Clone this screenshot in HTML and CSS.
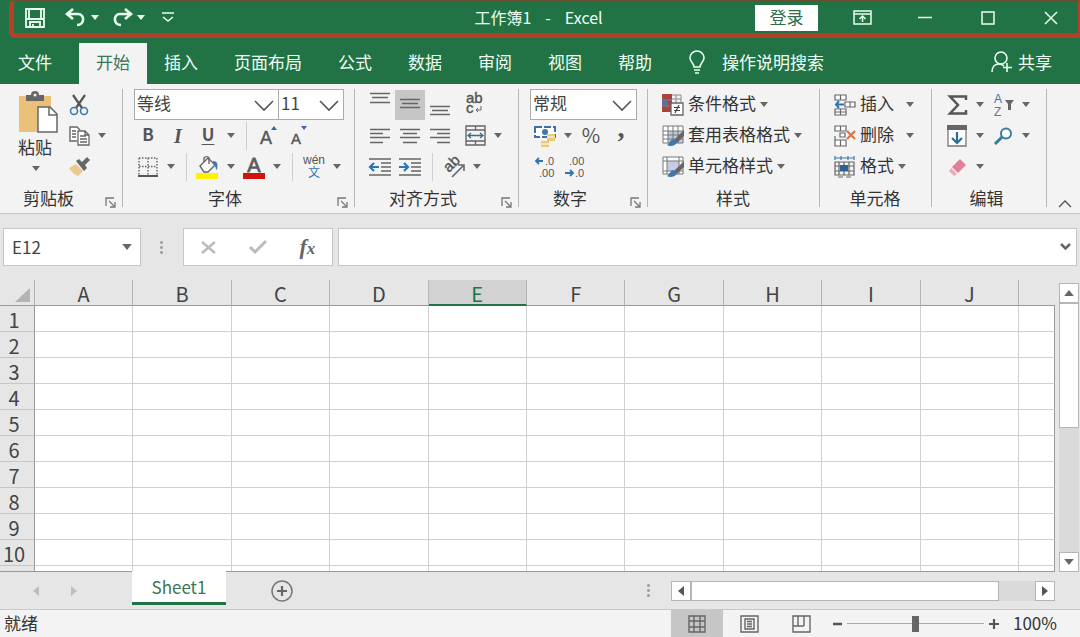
FILE: index.html
```html
<!DOCTYPE html>
<html lang="zh-CN">
    <head>
        <meta charset="utf-8">
        <title>工作簿1 - Excel</title>
        <link rel="stylesheet" href="styles.css">
    </head>
    <body>
        <svg class="defs">
            <symbol id="down" viewBox="0 0 8 5"><path d="M0 0h8L4 5z" fill="currentColor"/></symbol>
            <symbol id="chev" viewBox="0 0 20 12"><path d="M1 1l9 9 9-9" fill="none" stroke="#555" stroke-width="1.6"/></symbol>
            <symbol id="launch" viewBox="0 0 11 11"><path d="M1 9V1h8M4 4l5 5M10 5v5H5" fill="none" stroke="#777" stroke-width="1.3"/></symbol>
            <symbol id="brush" viewBox="0 0 22 22"><path d="M22 5v6l-7 7-3-3z" fill="#666"/><path d="M11 14c-3 1-3 4-6 6 3 2 9 1 10-3z" fill="#3f78ad"/></symbol>
        </svg>

        <header>
            <div class="titlebar">
                <div class="quick">
                    <button class="qbtn" aria-label="保存"><svg width="20" height="20" viewBox="0 0 20 20"><path d="M1 1h18v18H1zM1 11h18M4 1v10M16 1v10M5 19v-5h10v5M8 19v-3" fill="none" stroke="#e8fff0" stroke-width="1.8"/></svg></button>
                    <button class="qbtn" aria-label="撤消"><svg width="21" height="19" viewBox="0 0 21 19"><path d="M8 1L2 6l6 5M2 6h11c7 0 7 11-1 11" fill="none" stroke="#e8fff0" stroke-width="2.6"/></svg></button>
                    <button class="arr" aria-label="撤消列表"><svg width="8" height="5"><use href="#down"/></svg></button>
                    <button class="qbtn" aria-label="恢复"><svg width="21" height="19" viewBox="0 0 21 19"><path d="M13 1l6 5-6 5M19 6H8c-7 0-7 11 1 11" fill="none" stroke="#e8fff0" stroke-width="2.6"/></svg></button>
                    <button class="arr" aria-label="恢复列表"><svg width="8" height="5"><use href="#down"/></svg></button>
                    <button class="qbtn" aria-label="自定义"><svg width="12" height="11" viewBox="0 0 12 11"><path d="M0 1h12M1 5l5 4 5-4" fill="none" stroke="#e8fff0" stroke-width="1.5"/></svg></button>
                </div>
                <div class="title"><span>工作簿1</span><span>-</span><span>Excel</span></div>
                <div class="window">
                    <button class="login">登录</button>
                    <button class="wbtn" aria-label="功能区显示选项"><svg width="19" height="15" viewBox="0 0 19 15"><path d="M1 1h17v13H1zM1 4h17M9.500 12V6M6.500 9l3-3 3 3" fill="none" stroke="#e8fff0" stroke-width="1.5"/></svg></button>
                    <button class="wbtn" aria-label="最小化"><svg width="14" height="3" viewBox="0 0 14 3"><path d="M0 1.500h14" stroke="#e8fff0" stroke-width="1.5"/></svg></button>
                    <button class="wbtn" aria-label="最大化"><svg width="14" height="14" viewBox="0 0 14 14"><path d="M1 1h12v12H1z" fill="none" stroke="#e8fff0" stroke-width="1.5"/></svg></button>
                    <button class="wbtn" aria-label="关闭"><svg width="14" height="14" viewBox="0 0 14 14"><path d="M1 1l12 12M13 1L1 13" stroke="#e8fff0" stroke-width="1.5"/></svg></button>
                </div>
            </div>
            <nav class="tabs">
                <button class="tab file">文件</button>
                <button class="tab active">开始</button>
                <button class="tab">插入</button>
                <button class="tab">页面布局</button>
                <button class="tab">公式</button>
                <button class="tab">数据</button>
                <button class="tab">审阅</button>
                <button class="tab">视图</button>
                <button class="tab">帮助</button>
                <label class="tell">
                    <svg width="18" height="24" viewBox="0 0 18 24"><path d="M6 17c0-4-4-5-4-9a7 7 0 0 1 14 0c0 4-4 5-4 9zM6 20h6M7 23h4" fill="none" stroke="#e8fff0" stroke-width="1.6"/></svg>
                    <input type="text" placeholder="操作说明搜索">
                </label>
                <button class="share">
                    <svg width="22" height="22" viewBox="0 0 22 22"><circle cx="10" cy="7" r="6" fill="none" stroke="#e8fff0" stroke-width="1.6"/><path d="M1 21c0-5 3-8 7-8 2 0 3 0 5 2M16 12v9M12 16.500h9" fill="none" stroke="#e8fff0" stroke-width="1.6"/></svg>
                    共享
                </button>
            </nav>
        </header>

        <section class="ribbon">
            <div class="group clip">
                <div class="body paste-body">
                    <button class="paste">
                        <svg width="40" height="42" viewBox="0 0 40 42"><path d="M1 5h32v36H1z" fill="#ebc078"/><path d="M8 4h5a4 4 0 0 1 8 0h5v6H8z" fill="#666"/><circle cx="17" cy="4" r="1.500" fill="#f2f2f2"/><path d="M20 16h12l7 7v18H20z" fill="#fff" stroke="#666" stroke-width="1.500"/><path d="M31 16v8h8" fill="none" stroke="#666" stroke-width="1.500"/></svg>
                        <span>粘贴</span>
                        <svg width="8" height="5"><use href="#down"/></svg>
                    </button>
                    <div>
                        <div class="row"><button class="btn" aria-label="剪切"><svg width="20" height="20" viewBox="0 0 20 20"><path d="M4 0l9 13M16 0L7 13" stroke="#555" stroke-width="2.200"/><circle cx="5" cy="16" r="3.500" fill="none" stroke="#3f78ad" stroke-width="1.600"/><circle cx="15" cy="16" r="3.500" fill="none" stroke="#3f78ad" stroke-width="1.600"/></svg></button></div>
                        <div class="row"><button class="btn" aria-label="复制"><svg width="21" height="20" viewBox="0 0 21 20"><path d="M8 15H1V1h7l3 3" fill="#fff" stroke="#666" stroke-width="1.400"/><path d="M9 5h7l4 4v10H9zM16 5v4h4M3 5h4M3 8h4M3 11h4M11 10h6M11 13h7M11 16h7" fill="#fff" stroke="#666" stroke-width="1.300"/></svg></button><button class="arr" aria-label="复制选项"><svg width="8" height="5"><use href="#down"/></svg></button></div>
                        <div class="row"><button class="btn" aria-label="格式刷"><svg width="22" height="20" viewBox="0 0 22 20"><path d="M1 11l7-4 7 7-5 5c-2-1-5-2-9-8z" fill="#ebc890"/><path d="M8 4l3-2 3 3 5-5 3 3-5 5 2 3-3 3z" fill="#666"/></svg></button></div>
                    </div>
                </div>
                <div class="caption">剪贴板<button aria-label="剪贴板设置"><svg width="11" height="11"><use href="#launch"/></svg></button></div>
            </div>

            <div class="group font">
                <div class="body">
                    <div class="row">
                        <label class="combo name"><select aria-label="字体"><option>等线</option></select><svg width="20" height="12"><use href="#chev"/></svg></label>
                        <label class="combo size"><select aria-label="字号"><option>11</option></select><svg width="20" height="12"><use href="#chev"/></svg></label>
                    </div>
                    <div class="row">
                        <button class="btn bold">B</button>
                        <button class="btn italic">I</button>
                        <button class="btn underline">U</button>
                        <button class="arr" aria-label="下划线选项"><svg width="8" height="5"><use href="#down"/></svg></button>
                        <span class="sep"></span>
                        <button class="btn" aria-label="增大字号"><svg width="20" height="22" viewBox="0 0 20 22"><text x="2" y="19" font-size="18" stroke="#555" stroke-width=".4">A</text><path d="M13 5l3-4 3 4z" fill="#3f5fad"/></svg></button>
                        <button class="btn" aria-label="减小字号"><svg width="20" height="22" viewBox="0 0 20 22"><text x="3" y="19" font-size="15" stroke="#555" stroke-width=".4">A</text><path d="M13 1l3 4 3-4z" fill="#3f5fad"/></svg></button>
                    </div>
                    <div class="row">
                        <button class="btn" aria-label="边框"><svg width="20" height="20" viewBox="0 0 20 20"><path d="M1 1h18v17M1 1v17M10 1v17M1 9.500h18" fill="none" stroke="#666" stroke-width="1.400" stroke-dasharray="1.500 1.500"/><path d="M0 19h20" stroke="#555" stroke-width="2"/></svg></button>
                        <button class="arr" aria-label="边框选项"><svg width="8" height="5"><use href="#down"/></svg></button>
                        <span class="sep"></span>
                        <button class="btn" aria-label="填充颜色"><svg width="24" height="24" viewBox="0 0 24 24"><path d="M0 18h22v6H0z" fill="#fff200"/><path d="M4 11l8-8 7 7-7 7H8z" fill="#fff" stroke="#666" stroke-width="1.400"/><path d="M8 7V3a3 3 0 0 1 5 0v6" fill="none" stroke="#666" stroke-width="1.400"/><path d="M17 6c5 0 5 4 4 9-2-2-1-4-4-6z" fill="#3f78ad"/></svg></button>
                        <button class="arr" aria-label="填充颜色选项"><svg width="8" height="5"><use href="#down"/></svg></button>
                        <button class="btn" aria-label="字体颜色"><svg width="22" height="24" viewBox="0 0 22 24"><text x="11" y="17" font-size="20" text-anchor="middle" stroke="#666" stroke-width=".8">A</text><path d="M0 18h22v6H0z" fill="#d0140c"/></svg></button>
                        <button class="arr" aria-label="字体颜色选项"><svg width="8" height="5"><use href="#down"/></svg></button>
                        <span class="sep"></span>
                        <button class="btn" aria-label="拼音"><svg width="24" height="24" viewBox="0 0 24 24"><text x="12" y="9" font-size="12" text-anchor="middle">wén</text><text class="wen" x="12" y="22" font-size="12" text-anchor="middle">文</text></svg></button>
                        <button class="arr" aria-label="拼音选项"><svg width="8" height="5"><use href="#down"/></svg></button>
                    </div>
                </div>
                <div class="caption">字体<button aria-label="字体设置"><svg width="11" height="11"><use href="#launch"/></svg></button></div>
            </div>

            <div class="group align">
                <div class="body">
                    <div class="row">
                        <button class="btn" aria-label="顶端对齐"><svg width="20" height="26" viewBox="0 0 20 26"><path d="M0 1.500h20M2 5.500h16M0 10.500h20" stroke="#666" stroke-width="1.500"/></svg></button>
                        <button class="btn on" aria-label="垂直居中"><svg width="20" height="26" viewBox="0 0 20 26"><path d="M0 7.500h20M2 11.500h16M0 15.500h20" stroke="#666" stroke-width="1.500"/></svg></button>
                        <button class="btn" aria-label="底端对齐"><svg width="20" height="26" viewBox="0 0 20 26"><path d="M0 14.500h20M2 18.500h16M0 22.500h20" stroke="#666" stroke-width="1.500"/></svg></button>
                        <span class="gap"></span>
                        <button class="btn" aria-label="自动换行"><svg width="20" height="26" viewBox="0 0 20 26"><text x="1" y="11" font-size="15" stroke="#555" stroke-width=".4">ab</text><text x="1" y="21" font-size="15" stroke="#555" stroke-width=".4">c</text><path d="M16 14v4h-5M13 16l-2 2 2 2" fill="none" stroke="#666"/></svg></button>
                    </div>
                    <div class="row">
                        <button class="btn" aria-label="左对齐"><svg width="20" height="16" viewBox="0 0 20 16"><path d="M0 1.500h20M0 5.500h13M0 9.500h20M0 14.500h13" stroke="#666" stroke-width="1.500"/></svg></button>
                        <button class="btn" aria-label="居中"><svg width="20" height="16" viewBox="0 0 20 16"><path d="M0 1.500h20M3 5.500h14M0 9.500h20M3 14.500h14" stroke="#666" stroke-width="1.500"/></svg></button>
                        <button class="btn" aria-label="右对齐"><svg width="20" height="16" viewBox="0 0 20 16"><path d="M0 1.500h20M7 5.500h13M0 9.500h20M7 14.500h13" stroke="#666" stroke-width="1.500"/></svg></button>
                        <span class="gap"></span>
                        <button class="btn" aria-label="合并后居中"><svg width="21" height="21" viewBox="0 0 21 21"><path d="M1 1h19v19H1zM1 5h19M1 16h19M10.500 1v4M10.500 16v4" fill="none" stroke="#666" stroke-width="1.400"/><path d="M4 10.500h13M6 8l-3 2.500L6 13M15 8l3 2.500L15 13" fill="none" stroke="#3a6a86" stroke-width="1.300"/></svg></button>
                        <button class="arr" aria-label="合并选项"><svg width="8" height="5"><use href="#down"/></svg></button>
                    </div>
                    <div class="row">
                        <button class="btn" aria-label="减少缩进"><svg width="22" height="18" viewBox="0 0 22 18"><path d="M0 1h22M12 5h10M12 9h10M12 13h10M0 17h22" stroke="#666" stroke-width="1.500"/><path d="M10 9H2M5 5L1 9l4 4" fill="none" stroke="#2e75b6" stroke-width="2.200"/></svg></button>
                        <button class="btn" aria-label="增加缩进"><svg width="22" height="18" viewBox="0 0 22 18"><path d="M0 1h22M12 5h10M12 9h10M12 13h10M0 17h22" stroke="#666" stroke-width="1.500"/><path d="M0 9h8M5 5l4 4-4 4" fill="none" stroke="#2e75b6" stroke-width="2.200"/></svg></button>
                        <span class="sep"></span>
                        <button class="btn" aria-label="方向"><svg width="24" height="22" viewBox="0 0 24 22"><text x="0" y="0" font-size="15" stroke="#555" stroke-width=".4" transform="translate(7 17) rotate(-45)">ab</text><path d="M10 21L21 10M16 9h6v6" fill="none" stroke="#666" stroke-width="1.600"/></svg></button>
                        <button class="arr" aria-label="方向选项"><svg width="8" height="5"><use href="#down"/></svg></button>
                    </div>
                </div>
                <div class="caption">对齐方式<button aria-label="对齐设置"><svg width="11" height="11"><use href="#launch"/></svg></button></div>
            </div>

            <div class="group number">
                <div class="body">
                    <div class="row">
                        <label class="combo format"><select aria-label="数字格式"><option>常规</option></select><svg width="20" height="12"><use href="#chev"/></svg></label>
                    </div>
                    <div class="row">
                        <button class="btn" aria-label="会计数字格式"><svg width="24" height="22" viewBox="0 0 24 22"><path d="M2 2h20v10H2z" fill="#fff" stroke="#3f6fa8" stroke-width="2" stroke-dasharray="7 2"/><circle cx="12" cy="7" r="3" fill="#3f78ad"/><path d="M14 9h8v7h-8zM8 16h8v6H8z" fill="#ebc878"/><path d="M14 12h8M8 19h8" stroke="#fff"/></svg></button>
                        <button class="arr" aria-label="会计选项"><svg width="8" height="5"><use href="#down"/></svg></button>
                        <button class="btn percent">%</button>
                        <button class="btn comma">,</button>
                    </div>
                    <div class="row">
                        <button class="btn" aria-label="增加小数位数"><svg width="22" height="22" viewBox="0 0 22 22"><text x="11" y="9" font-size="11">.0</text><text x="5" y="21" font-size="11">.00</text><path d="M9 5H2M5 2L2 5l3 3" fill="none" stroke="#2e75b6" stroke-width="1.800"/></svg></button>
                        <button class="btn" aria-label="减少小数位数"><svg width="22" height="22" viewBox="0 0 22 22"><text x="5" y="9" font-size="11">.00</text><text x="11" y="21" font-size="11">.0</text><path d="M1 17h8M6 14l3 3-3 3" fill="none" stroke="#2e75b6" stroke-width="1.800"/></svg></button>
                    </div>
                </div>
                <div class="caption">数字<button aria-label="数字设置"><svg width="11" height="11"><use href="#launch"/></svg></button></div>
            </div>

            <div class="group style">
                <div class="body">
                    <div class="row"><button class="cmd"><svg width="22" height="22" viewBox="0 0 22 22"><path d="M0 0h10v18H0z" fill="#a5453c"/><path d="M10 1h9v8M14 1v8M10 5h9M0 6h10M0 12h8" fill="none" stroke="#888"/><path d="M0 6h6v5H0z" fill="#5b6fa0"/><path d="M9 9h12v12H9z" fill="#fff" stroke="#666" stroke-width="1.300"/><path d="M12 13.500h6M12 16.500h6M17 11l-4 8" stroke="#444" stroke-width="1.200"/></svg><span>条件格式</span><svg width="8" height="5"><use href="#down"/></svg></button></div>
                    <div class="row"><button class="cmd"><svg width="22" height="22" viewBox="0 0 22 22"><path d="M1 1h20v17H1z" fill="#fff"/><path d="M6 6h15v12H6z" fill="#b9cbe2"/><path d="M1 1h20v17H1zM1 6h20M1 10h20M1 14h20M6 1v17M11 1v17M16 1v17" fill="none" stroke="#777"/><use href="#brush"/></svg><span>套用表格格式</span><svg width="8" height="5"><use href="#down"/></svg></button></div>
                    <div class="row"><button class="cmd"><svg width="22" height="22" viewBox="0 0 22 22"><path d="M1 1h20v17H1z" fill="#fff"/><path d="M5 5h12v10H5z" fill="#c5cde6"/><path d="M1 1h20v17H1zM1 5h20M5 1v17M17 1v17M1 15h20" fill="none" stroke="#777"/><use href="#brush"/></svg><span>单元格样式</span><svg width="8" height="5"><use href="#down"/></svg></button></div>
                </div>
                <div class="caption">样式</div>
            </div>

            <div class="group cells">
                <div class="body">
                    <div class="row"><button class="cmd wide"><svg width="22" height="22" viewBox="0 0 22 22"><path d="M1 1h11v5H1zM6.500 1v5M1 15h11v6H1zM6.500 15v6M1 18h11M11 8h10v5H11zM16 8v5" fill="#fff" stroke="#666" stroke-width="1.200"/><path d="M10 10.500H2M5 7l-3 3.500L5 14" fill="none" stroke="#2e75b6" stroke-width="2"/></svg><span>插入</span><svg width="8" height="5"><use href="#down"/></svg></button></div>
                    <div class="row"><button class="cmd wide"><svg width="22" height="22" viewBox="0 0 22 22"><path d="M1 1h11v5H1zM6.500 1v5M1 15h11v6H1zM6.500 15v6M1 11v4M6 8h5v4H6z" fill="#fff" stroke="#666" stroke-width="1.200"/><path d="M13 6l8 8M21 6l-8 8" stroke="#de7440" stroke-width="2.200"/></svg><span>删除</span><svg width="8" height="5"><use href="#down"/></svg></button></div>
                    <div class="row"><button class="cmd"><svg width="22" height="22" viewBox="0 0 22 22"><path d="M1 6h19v13H1zM1 10h19M1 15h19M5 6v13M10 6v13M15 6v13M4 21h5M12 21h5" fill="none" stroke="#666" stroke-width="1.200"/><path d="M6 9h8v6H6z" fill="#2e6090"/><path d="M1 0v4M20 0v4M1 2h19M7 0v4M14 0v4" stroke="#3f78ad" stroke-width="1.200"/></svg><span>格式</span><svg width="8" height="5"><use href="#down"/></svg></button></div>
                </div>
                <div class="caption">单元格</div>
            </div>

            <div class="group edit">
                <div class="body">
                    <div class="row">
                        <button class="btn" aria-label="自动求和"><svg width="20" height="20" viewBox="0 0 20 20"><path d="M19 5V1.500H3L11 10l-8 8.500h16V15" fill="none" stroke="#555" stroke-width="2.500"/></svg></button>
                        <button class="arr" aria-label="求和选项"><svg width="8" height="5"><use href="#down"/></svg></button>
                        <button class="btn" aria-label="排序和筛选"><svg width="22" height="24" viewBox="0 0 22 24"><text class="a" x="2" y="10" font-size="12">A</text><text class="z" x="2" y="23" font-size="12">Z</text><path d="M13 7h9l-3 4v6h-3v-6z" fill="#666"/></svg></button>
                        <button class="arr" aria-label="排序选项"><svg width="8" height="5"><use href="#down"/></svg></button>
                    </div>
                    <div class="row">
                        <button class="btn" aria-label="填充"><svg width="20" height="22" viewBox="0 0 20 22"><path d="M1 1h18v20H1z" fill="#fff" stroke="#777" stroke-width="1.300"/><path d="M0 0h20v5H0z" fill="#666"/><path d="M10 7v11M5 13l5 5 5-5" fill="none" stroke="#2e6f90" stroke-width="2.200"/></svg></button>
                        <button class="arr" aria-label="填充选项"><svg width="8" height="5"><use href="#down"/></svg></button>
                        <button class="btn" aria-label="查找和选择"><svg width="20" height="18" viewBox="0 0 20 18"><circle cx="13" cy="6.500" r="5" fill="#fff" stroke="#3a7a9c" stroke-width="2"/><path d="M9 10l-7 7" stroke="#3a7a9c" stroke-width="3"/></svg></button>
                        <button class="arr" aria-label="查找选项"><svg width="8" height="5"><use href="#down"/></svg></button>
                    </div>
                    <div class="row">
                        <button class="btn" aria-label="清除"><svg width="18" height="18" viewBox="0 0 18 18"><path d="M12 1l6 6-8 8-6-6z" fill="#e08098"/><path d="M3 10l6 6-3 2-5-5z" fill="#eda9b8"/></svg></button>
                        <button class="arr" aria-label="清除选项"><svg width="8" height="5"><use href="#down"/></svg></button>
                    </div>
                </div>
                <div class="caption">编辑</div>
            </div>
            <button class="collapse" aria-label="折叠功能区"><svg width="14" height="8" viewBox="0 0 14 8"><path d="M1 7l6-6 6 6" fill="none" stroke="#555" stroke-width="1.400"/></svg></button>
        </section>

        <section class="formula">
            <label class="namebox"><input type="text" value="E12" aria-label="名称框"><svg width="10" height="6"><use href="#down"/></svg></label>
            <span class="dots"></span>
            <div class="fx">
                <button aria-label="取消"><svg width="15" height="13" viewBox="0 0 15 13"><path d="M1 1l13 11M14 1L1 12" stroke="#bbb" stroke-width="2.500"/></svg></button>
                <button aria-label="输入"><svg width="18" height="14" viewBox="0 0 18 14"><path d="M1 7l5 5L17 1" fill="none" stroke="#bbb" stroke-width="3"/></svg></button>
                <button class="fn"><i>f</i><i class="x">x</i></button>
            </div>
            <label class="entry"><input type="text" aria-label="编辑栏"><svg width="11" height="8" viewBox="0 0 11 8"><path d="M1 1l4.500 4.500L10 1" fill="none" stroke="#666" stroke-width="2.500"/></svg></label>
        </section>

        <main>
            <div class="sheet">
                <table>
                    <thead><tr id="letters"></tr></thead>
                    <tbody id="rows"></tbody>
                </table>
            </div>
            <div class="vscroll">
                <button aria-label="向上滚动"><svg class="up" width="10" height="6"><use href="#down"/></svg></button>
                <div class="vthumb"></div>
                <button class="end" aria-label="向下滚动"><svg width="10" height="6"><use href="#down"/></svg></button>
            </div>
        </main>

        <section class="sheets">
            <div class="nav">
                <button aria-label="上一个"><svg width="6" height="10" viewBox="0 0 6 10"><path d="M6 0v10L0 5z" fill="#bdbdbd"/></svg></button>
                <button aria-label="下一个"><svg width="6" height="10" viewBox="0 0 6 10"><path d="M0 0v10l6-5z" fill="#bdbdbd"/></svg></button>
            </div>
            <button class="sheettab">Sheet1</button>
            <button class="add" aria-label="新工作表"><svg width="22" height="22" viewBox="0 0 22 22"><circle cx="11" cy="11" r="10" fill="none" stroke="#777" stroke-width="1.500"/><path d="M11 6v10M6 11h10" stroke="#666" stroke-width="2.200"/></svg></button>
            <span class="dots"></span>
            <div class="hscroll">
                <button aria-label="向左滚动"><svg width="6" height="10" viewBox="0 0 6 10"><path d="M6 0v10L0 5z" fill="#555"/></svg></button>
                <div class="hthumb"></div>
                <button class="end" aria-label="向右滚动"><svg width="6" height="10" viewBox="0 0 6 10"><path d="M0 0v10l6-5z" fill="#555"/></svg></button>
            </div>
        </section>

        <footer>
            <span class="ready">就绪</span>
            <button class="view on" aria-label="普通"><svg width="18" height="18" viewBox="0 0 18 18"><path d="M1 1h16v16H1zM1 6h16M1 12h16M6 1v16M12 1v16" fill="none" stroke="#666" stroke-width="1.400"/></svg></button>
            <button class="view" aria-label="页面布局"><svg width="19" height="18" viewBox="0 0 19 18"><path d="M1 1h17v16H1zM5 4h9v10H5zM7 6.500h5M7 9h5M7 11.500h5" fill="none" stroke="#666" stroke-width="1.400"/></svg></button>
            <button class="view" aria-label="分页预览"><svg width="19" height="18" viewBox="0 0 19 18"><path d="M1 1h17v16H1zM6 1v10M12 1v10M1 11h11" fill="none" stroke="#666" stroke-width="1.400"/></svg></button>
            <button class="zoom" aria-label="缩小"><svg width="9" height="10" viewBox="0 0 9 10"><path d="M0 5h9" stroke="#555" stroke-width="2.500"/></svg></button>
            <input type="range" min="0" max="100" value="50" aria-label="缩放">
            <button class="zoom" aria-label="放大"><svg width="10" height="10" viewBox="0 0 10 10"><path d="M0 5h10M5 0v10" stroke="#555" stroke-width="2.200"/></svg></button>
            <span class="level">100%</span>
        </footer>

        <script>
            var head = '<th class="corner"><svg width="15" height="14"><path d="M15 0v14H0z" fill="#b3b3b3"/></svg></th>';
            var cols = "ABCDEFGHIJ";
            for (var i = 0; i < cols.length; i++)
            {
                head += '<th' + (cols[i] == 'E' ? ' class="sel"' : '') + '>' + cols[i] + '</th>';
            }
            document.getElementById('letters').innerHTML = head + '<th class="rest"></th>';

            var body = "";
            for (var r = 1; r <= 11; r++)
            {
                body += '<tr><th>' + (r <= 10 ? r : '') + '</th>';
                for (var c = 0; c < 11; c++)
                    body += '<td></td>';
                body += '</tr>';
            }
            document.getElementById('rows').innerHTML = body;
        </script>
    </body>
</html>
```
FILE: styles.css
```css
*{
    box-sizing: border-box;
}
body{
    margin: 0;
    height: 100vh;
    display: flex;
    flex-direction: column;
    overflow: hidden;
    background: #e6e6e6;
    color: #333;
    font-family: "Noto Sans CJK SC", sans-serif;
    font-size: 17px;
    line-height: 20px;
}
button, input, select{
    font: inherit;
    color: inherit;
    border: 0;
    padding: 0;
    margin: 0;
    background: none;
    outline: none;
}
button{
    display: flex;
    align-items: center;
    justify-content: center;
    flex: none;
}
svg{
    flex: none;
    overflow: visible;
}
svg text{
    fill: #555;
    font-family: "Liberation Sans", "Noto Sans CJK SC", sans-serif;
}
svg .wen{
    fill: #2e75b6;
}
svg .a{
    fill: #3f6fad;
}
svg .z{
    fill: #8a5fa8;
}
.defs{
    position: absolute;
    width: 0;
    height: 0;
}

/* title bar and tabs */
header{
    background: #217346;
    color: #f0fff5;
}
.titlebar{
    height: 38px;
    margin-left: 9px;
    display: grid;
    grid-template-columns: 1fr auto 1fr;
    align-items: center;
    border: 5px solid #b5402a;
    border-top: 2px solid #6a5030;
    border-right-width: 2px;
    border-radius: 6px 0 0 6px;
}
.quick{
    display: flex;
    align-items: center;
    padding-left: 1px;
}
.qbtn{
    width: 40px;
    height: 30px;
}
.quick .qbtn + .arr{
    margin-left: -8px;
}
.quick .arr + .qbtn{
    width: 38px;
}
.title{
    display: flex;
    gap: 14px;
    padding: 0 15px 2px 0;
    font-size: 16px;
}
.window{
    display: flex;
    justify-content: flex-end;
    align-items: center;
    gap: 9px;
}
.login{
    width: 63px;
    height: 26px;
    margin-right: 8px;
    padding-bottom: 2px;
    background: #fff;
    color: #2f6a4a;
}
.wbtn{
    width: 54px;
    height: 26px;
}
.tabs{
    height: 46px;
    padding-top: 5px;
    display: flex;
}
.tab{
    padding: 0 18px 4px;
}
.file{
    margin-right: 9px;
}
.active{
    padding: 0 17px 4px;
    margin-right: -1px;
    background: #f3f3f3;
    color: #3c7556;
}
.tell{
    display: flex;
    align-items: center;
    gap: 16px;
    margin-left: 18px;
    padding-bottom: 4px;
}
.tell input{
    width: 120px;
}
.tell input::placeholder{
    color: #f0fff5;
    opacity: 1;
}
.share{
    margin-left: auto;
    margin-right: 28px;
    padding-bottom: 4px;
    gap: 5px;
}

/* ribbon */
.ribbon{
    display: flex;
    background: #f3f3f3;
    border-bottom: 1px solid #c8c8c8;
}
.group{
    position: relative;
    padding-top: 5px;
    flex: none;
}
.group::after{
    content: "";
    position: absolute;
    top: 5px;
    bottom: 6px;
    right: 0;
    border-right: 1px solid #b8b8b8;
}
.clip{ width: 123px; padding-left: 12px; }
.font{ width: 232px; padding-left: 10px; }
.align{ width: 164px; padding-left: 10px; }
.number{ width: 129px; padding-left: 11px; }
.style{ width: 172px; padding-left: 14px; }
.cells{ width: 112px; padding-left: 14px; }
.edit{ width: 115px; padding-left: 10px; }
.row{
    height: 31px;
    display: flex;
    align-items: center;
}
.btn{
    width: 30px;
    height: 30px;
    color: #555;
}
.btn.on, .view.on{
    background: #c6c6c6;
}
.arr{
    width: 16px;
    height: 30px;
    color: #666;
}
.quick .arr{
    color: #e8fff0;
}
.sep{
    width: 14px;
    height: 28px;
    background: linear-gradient(#cfcfcf, #cfcfcf) center / 1px 100% no-repeat;
}
.gap{
    width: 5px;
}
.bold, .underline{
    font-weight: bold;
    padding-bottom: 3px;
}
.italic{
    font-family: "Liberation Serif", serif;
    font-style: italic;
    font-weight: bold;
    font-size: 20px;
}
.underline{
    text-decoration: underline;
    text-underline-offset: 3px;
}
.percent{
    font-size: 20px;
    padding-bottom: 2px;
}
.comma{
    font-family: "Liberation Serif", serif;
    font-weight: bold;
    font-size: 28px;
    padding-bottom: 16px;
}
.paste-body{
    display: flex;
}
.paste{
    width: 52px;
    height: 93px;
    padding-top: 2px;
    flex-direction: column;
    justify-content: flex-start;
    gap: 4px;
    color: #333;
}
.paste span{
    margin-right: 6px;
}
.paste svg:last-child{
    margin: 5px 4px 0 0;
    color: #666;
}
.cmd{
    height: 30px;
    gap: 4px;
    color: #666;
}
.cmd span{
    padding-bottom: 3px;
    color: #333;
}
.wide span{
    margin-right: 8px;
}
.caption{
    height: 31px;
    padding-top: 6px;
    text-align: center;
}
.clip .caption, .font .caption, .align .caption, .number .caption{
    padding-right: 38px;
}
.style .caption, .cells .caption, .edit .caption{
    padding-right: 16px;
}
.caption button{
    position: absolute;
    right: 7px;
    bottom: 5px;
}
.combo{
    position: relative;
    height: 31px;
    border: 1px solid #ababab;
    background: #fff;
}
.combo select{
    appearance: none;
    width: 100%;
    height: 29px;
    padding: 0 0 3px 2px;
    color: #444;
}
.combo svg{
    position: absolute;
    right: 4px;
    top: 10px;
    pointer-events: none;
}
.name{ width: 145px; margin-left: 1px; }
.size{ width: 66px; margin-left: -1px; }
.format{ width: 107px; }
.collapse{
    margin: auto 8px 5px auto;
}

/* formula bar */
.formula{
    display: flex;
    align-items: center;
    padding: 14px 3px;
}
.namebox, .fx, .entry{
    height: 38px;
    display: flex;
    align-items: center;
    background: #fff;
    border: 1px solid #c6c6c6;
}
.namebox{
    width: 138px;
    padding: 0 8px;
    color: #666;
}
.namebox input{
    width: 100%;
    color: #444;
}
.dots{
    width: 3px;
    height: 15px;
    background: radial-gradient(circle, #a0a0a0 1px, transparent 2px) center top / 3px 5px;
}
.formula .dots{
    margin: 0 20px 0 19px;
}
.fx{
    width: 150px;
    justify-content: space-around;
}
.fx button{
    width: 48px;
    height: 36px;
}
.fx .fn{
    font: italic bold 22px/24px "Liberation Serif", serif;
    color: #666;
}
.fn .x{
    font-size: 17px;
    padding-top: 4px;
}
.entry{
    flex: 1;
    margin-left: 5px;
    padding-right: 5px;
}
.entry input{
    flex: 1;
}

/* grid */
main{
    flex: 1;
    min-height: 0;
    display: flex;
}
.sheet{
    flex: 1;
    overflow: hidden;
    border-bottom: 1px solid #999;
}
table{
    width: 100%;
    table-layout: fixed;
    border-collapse: separate;
    border-spacing: 0;
}
th{
    height: 26px;
    padding: 0;
    font-weight: normal;
    font-size: 20px;
    line-height: 20px;
    color: #444;
}
thead th{
    padding-top: 3px;
    border-right: 1px solid #b5b5b5;
    border-bottom: 1px solid #999;
}
.corner{
    width: 35px;
    text-align: right;
    padding-right: 4px;
}
.rest{
    width: 36px;
}
thead .rest{
    border-right: 0;
}
thead .sel{
    padding-top: 4px;
    background: #d2d2d2;
    color: #217346;
    border-bottom: 2px solid #217346;
}
tbody th{
    padding-right: 6px;
    border-right: 1px solid #999;
    border-bottom: 1px solid #c6c6c6;
    padding-top: 2px;
}
td{
    padding: 0;
    background: #fff;
    border-right: 1px solid #d0d0d0;
    border-bottom: 1px solid #d0d0d0;
}
td:last-child{
    border-right-color: #999;
}
.vscroll{
    width: 20px;
    margin: 3px 1px 0 4px;
    display: flex;
    flex-direction: column;
    background: #dadada;
}
.vscroll button, .hscroll button{
    width: 20px;
    height: 20px;
    background: #fff;
    border: 1px solid #b5b5b5;
    color: #666;
}
.up{
    transform: rotate(180deg);
}
.vthumb{
    height: 125px;
    background: #fff;
    border: 1px solid #b5b5b5;
}
.vscroll .end{
    margin-top: auto;
}

/* sheet tabs */
.sheets{
    height: 38px;
    display: flex;
    align-items: center;
    border-bottom: 1px solid #c8c8c8;
}
.nav{
    width: 132px;
    display: flex;
    gap: 32px;
    padding-left: 33px;
}
.sheettab{
    align-self: flex-start;
    width: 94px;
    height: 34px;
    margin-top: -1px;
    background: #fff;
    color: #3c7556;
    border-bottom: 3px solid #217346;
}
.add{
    margin-left: 45px;
}
.sheets .dots{
    margin: 0 21px 0 auto;
}
.hscroll{
    width: 384px;
    margin-right: 25px;
    display: flex;
    background: #dadada;
}
.hthumb{
    width: 308px;
    border: 1px solid #b5b5b5;
    background: #fff;
}
.hscroll .end{
    margin-left: auto;
}

/* status bar */
footer{
    height: 27px;
    display: flex;
    align-items: center;
    background: #f3f3f3;
}
.ready{
    margin: 0 auto 0 4px;
}
.view{
    width: 52px;
    height: 27px;
}
.zoom{
    width: 20px;
    height: 27px;
}
footer input{
    appearance: none;
    width: 137px;
    height: 16px;
    background: linear-gradient(#aaa, #aaa) center / 100% 1px no-repeat;
}
footer input::-webkit-slider-thumb{
    appearance: none;
    width: 7px;
    height: 16px;
    background: #666;
}
.level{
    width: 67px;
    margin-left: 9px;
}
.ready, .level{
    padding-bottom: 2px;
}
```
